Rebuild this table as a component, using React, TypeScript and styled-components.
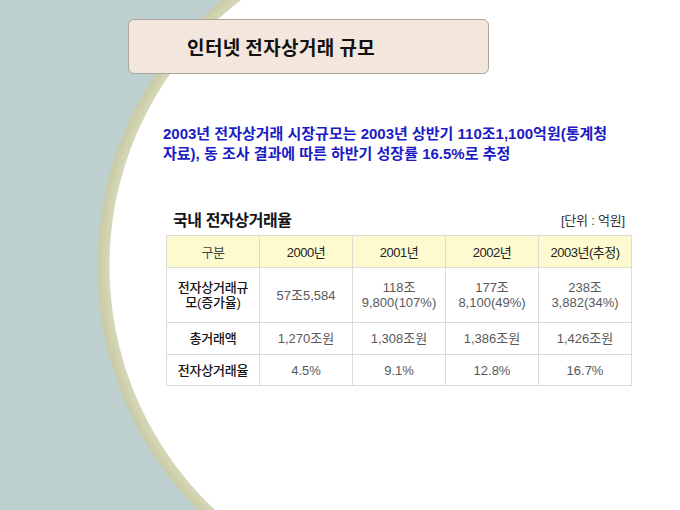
import React from "react";
import styled, { createGlobalStyle } from "styled-components";

const GlobalStyle = createGlobalStyle`
  html, body { margin: 0; padding: 0; background: #ffffff; }
  * { box-sizing: border-box; }
`;

const KR = `"Noto Sans CJK KR", "Noto Sans", sans-serif`;
const MIX = `"Liberation Sans", "Noto Sans CJK KR", sans-serif`;

const Slide = styled.div`
  width: 680px;
  height: 510px;
  overflow: hidden;
  font-family: ${MIX};
  display: flex;
  flex-direction: column;
  padding-top: 19px;
  background:
    radial-gradient(circle at 444px 266px, #ffffff 0 334px, #d6d7b8 335px, #c9cba4 346px, #bdd0cf 347px)
      0 0 / 444px 100% no-repeat,
    #ffffff;
`;

const TitleBox = styled.div`
  margin-left: 128px;
  width: 361px;
  height: 55px;
  background: #f3e6dc;
  border: 1px solid #a9a69e;
  border-radius: 6px;
  display: flex;
  align-items: center;
  padding-left: 58px;
`;

const Title = styled.h1`
  margin: 0;
  font-family: ${KR};
  font-size: 19px;
  font-weight: 700;
  color: #111111;
  letter-spacing: 0.4px;
`;

const Lead = styled.p`
  margin: 50px 0 0 163px;
  width: 500px;
  font-size: 15px;
  line-height: 20px;
  font-weight: 700;
  color: #1c1cc4;
  letter-spacing: 0px;
`;

const Section = styled.section`
  margin: 44px 0 0 166px;
  width: 466px;
  display: flex;
  flex-direction: column;
`;

const SectionHead = styled.div`
  display: flex;
  justify-content: space-between;
  align-items: center;
  padding: 0 7px 0 7px;
  height: 22px;
`;

const SectionTitle = styled.h2`
  margin: 0;
  font-size: 16px;
  font-weight: 700;
  color: #151515;
  letter-spacing: -0.4px;
`;

const Unit = styled.span`
  font-size: 13px;
  color: #333333;
  letter-spacing: -0.2px;
`;

const Table = styled.table`
  margin-top: 5px;
  width: 466px;
  border-collapse: collapse;
  table-layout: fixed;
`;

const Th = styled.th<{ $first?: boolean }>`
  height: 32px;
  background: #fefad0;
  border: 1px solid #dcdcd4;
  font-size: 13px;
  font-weight: 400;
  color: ${(p) => (p.$first ? "#444444" : "#222222")};
  letter-spacing: -0.5px;
  text-align: center;
`;

const Td = styled.td<{ $label?: boolean; $h: number }>`
  height: ${(p) => p.$h}px;
  border: 1px solid #dcdcd4;
  text-align: center;
  font-size: 13px;
  line-height: 15px;
  letter-spacing: ${(p) => (p.$label ? "-0.2px" : "0px")};
  color: ${(p) => (p.$label ? "#141414" : "#595959")};
  font-weight: ${(p) => (p.$label ? 500 : 400)};
  background: #ffffff;
`;

const headers = ["구분", "2000년", "2001년", "2002년", "2003년(추정)"];

const rows: { h: number; cells: React.ReactNode[] }[] = [
  {
    h: 55,
    cells: [
      <>전자상거래규<br />모(증가율)</>,
      "57조5,584",
      <>118조<br />9,800(107%)</>,
      <>177조<br />8,100(49%)</>,
      <>238조<br />3,882(34%)</>,
    ],
  },
  { h: 32, cells: ["총거래액", "1,270조원", "1,308조원", "1,386조원", "1,426조원"] },
  { h: 31, cells: ["전자상거래율", "4.5%", "9.1%", "12.8%", "16.7%"] },
];

export default function App() {
  return (
    <>
      <GlobalStyle />
      <Slide>
        <TitleBox>
          <Title>인터넷 전자상거래 규모</Title>
        </TitleBox>
        <Lead>
          2003년 전자상거래 시장규모는 2003년 상반기 110조1,100억원(통계청
          <br />
          자료), 동 조사 결과에 따른 하반기 성장률 16.5%로 추정
        </Lead>
        <Section>
          <SectionHead>
            <SectionTitle>국내 전자상거래율</SectionTitle>
            <Unit>[단위 : 억원]</Unit>
          </SectionHead>
          <Table>
            <thead>
              <tr>
                {headers.map((h, i) => (
                  <Th key={h} $first={i === 0}>{h}</Th>
                ))}
              </tr>
            </thead>
            <tbody>
              {rows.map((r, ri) => (
                <tr key={ri}>
                  {r.cells.map((c, ci) => (
                    <Td key={ci} $h={r.h} $label={ci === 0}>{c}</Td>
                  ))}
                </tr>
              ))}
            </tbody>
          </Table>
        </Section>
      </Slide>
    </>
  );
}
